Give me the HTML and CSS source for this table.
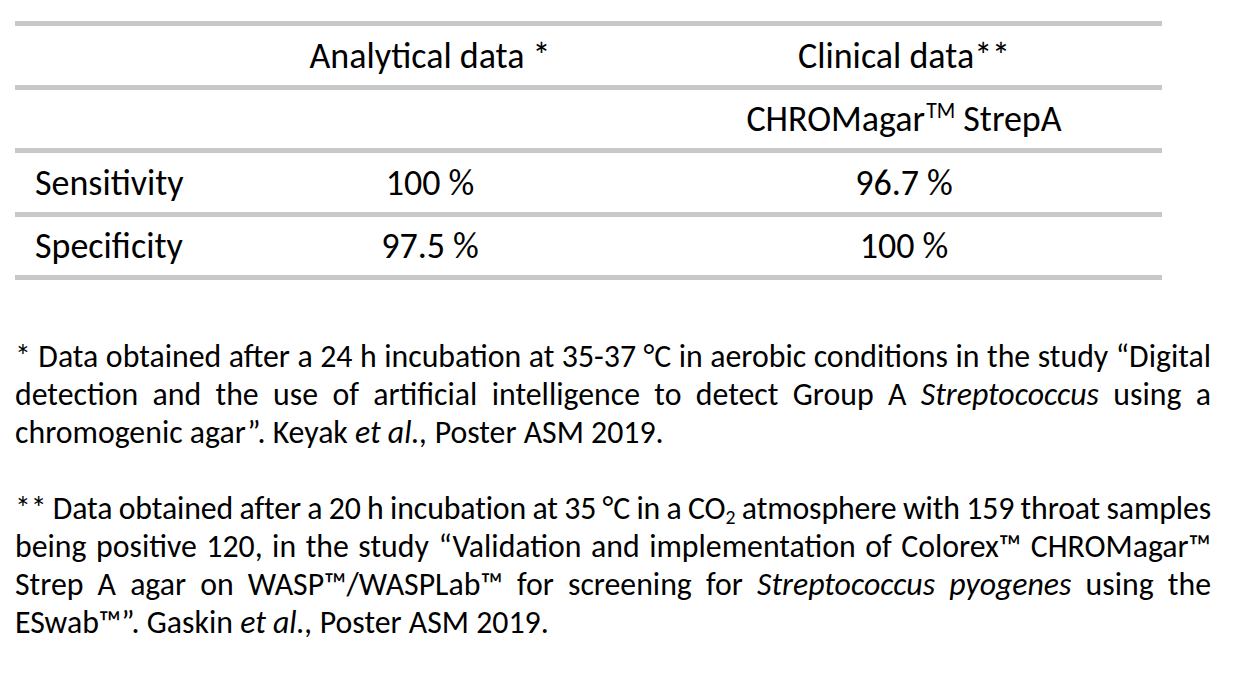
FILE: index.html
```html
<!DOCTYPE html>
<html lang="en">
<head>
<meta charset="utf-8">
<title>CHROMagar StrepA performance</title>
<link rel="stylesheet" href="styles.css">
</head>
<body>
<div class="page">
  <div class="perf-table">
    <div class="row row-tall">
      <div class="cell label"></div>
      <div class="cell value">Analytical data *</div>
      <div class="cell value">Clinical data**</div>
    </div>
    <div class="row">
      <div class="cell label"></div>
      <div class="cell value"></div>
      <div class="cell value">CHROMagar<sup class="tm">TM</sup> StrepA</div>
    </div>
    <div class="row row-tall">
      <div class="cell label">Sensitivity</div>
      <div class="cell value">100 %</div>
      <div class="cell value">96.7 %</div>
    </div>
    <div class="row">
      <div class="cell label">Specificity</div>
      <div class="cell value">97.5 %</div>
      <div class="cell value">100 %</div>
    </div>
  </div>

  <div class="notes">
    <p class="note">
      <span class="line">* Data obtained after a 24 h incubation at 35-37 °C in aerobic conditions in the study “Digital</span>
      <span class="line">detection and the use of artificial intelligence to detect Group A <i>Streptococcus</i> using a</span>
      <span class="line last">chromogenic agar”. Keyak <i>et al.,</i> Poster ASM 2019.</span>
    </p>
    <p class="note">
      <span class="line tight">** Data obtained after a 20 h incubation at 35 °C in a CO<sub class="sub">2</sub> atmosphere with 159 throat samples</span>
      <span class="line">being positive 120, in the study “Validation and implementation of Colorex™ CHROMagar™</span>
      <span class="line">Strep A agar on WASP™/WASPLab™ for screening for <i>Streptococcus pyogenes</i> using the</span>
      <span class="line last">ESwab™”. Gaskin <i>et al.,</i> Poster ASM 2019.</span>
    </p>
  </div>
</div>
</body>
</html>
```
FILE: styles.css
```css
html, body {
  margin: 0;
  padding: 0;
  background: #ffffff;
}

body {
  font-family: "Carlito", "Calibri", "Lato", sans-serif;
  color: #000000;
}

.page {
  width: 1234px;
  height: 676px;
  overflow: hidden;
  padding-top: 21px;
  box-sizing: border-box;
}

/* ---------- table ---------- */
.perf-table {
  margin-left: 15px;
  width: 1147px;
  border-top: 5px solid #c8c8ca;
  font-size: 36px;
}

.row {
  display: grid;
  grid-template-columns: 199px 432px 516px;
  align-items: center;
  height: 59px;
  border-bottom: 5px solid #c8c8ca;
}

.row + .row {
  height: 58px;
}

.row + .row.row-tall {
  height: 59px;
}

.cell {
  white-space: nowrap;
}

.label {
  padding-left: 20px;
}

.value {
  text-align: center;
}

.tm {
  font-size: 0.6em;
  line-height: 0;
  vertical-align: 0.62em;
  margin-left: 1px;
}

/* ---------- footnotes ---------- */
.notes {
  margin-top: 58px;
  margin-left: 15px;
  width: 1196px;
  font-size: 31.8px;
  line-height: 38px;
}

.note {
  margin: 0 0 38px 0;
}

.line {
  display: block;
  text-align: justify;
  text-align-last: justify;
  white-space: nowrap;
}

.line.last {
  text-align: left;
  text-align-last: left;
}

.line.tight {
  letter-spacing: -0.12px;
  word-spacing: -1.5px;
}

.sub {
  font-size: 0.62em;
  line-height: 0;
  vertical-align: -0.25em;
}
```
